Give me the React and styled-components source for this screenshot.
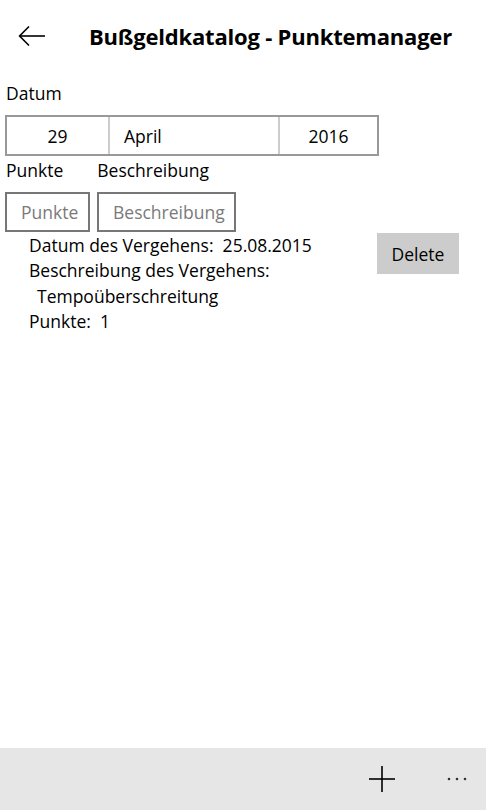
import React from 'react';
import styled, { createGlobalStyle } from 'styled-components';

const GlobalStyle = createGlobalStyle`
  html, body {
    margin: 0;
    padding: 0;
    background: #fff;
  }
  body {
    font-family: "Open Sans", "Noto Sans", sans-serif;
    color: #000;
  }
`;

const Page = styled.div`
  width: 486px;
  height: 810px;
  display: flex;
  flex-direction: column;
  overflow: hidden;
`;

const Header = styled.header`
  height: 72px;
  display: flex;
  align-items: center;
  padding-left: 18px;
  gap: 43px;
`;

const BackButton = styled.button`
  border: none;
  background: none;
  padding: 0;
  width: 28px;
  height: 24px;
  display: flex;
  align-items: center;
  justify-content: center;
  cursor: pointer;
`;

const Title = styled.h1`
  margin: 0;
  font-size: 22px;
  font-weight: 700;
  letter-spacing: -0.2px;
`;

const Content = styled.main`
  flex: 1;
  padding: 10px 0 0 5px;
`;

const Label = styled.div`
  font-size: 17.5px;
  line-height: 22px;
  margin-left: 1px;
`;

const DateBox = styled.div`
  margin-top: 11px;
  width: 374px;
  height: 41px;
  box-sizing: border-box;
  border: 2px solid #999;
  display: grid;
  grid-template-columns: 101px 170px 1fr;
`;

const DateCell = styled.div`
  display: flex;
  align-items: center;
  justify-content: ${p => (p.left ? 'flex-start' : 'center')};
  padding-left: ${p => (p.left ? '14px' : '0')};
  font-size: 17.5px;
  border-left: ${p => (p.first ? 'none' : '2px solid #ccc')};
`;

const LabelRow = styled.div`
  display: flex;
  gap: 33px;
  margin-top: 3px;
`;

const InputRow = styled.div`
  display: flex;
  gap: 7px;
  margin-top: 11px;
`;

const TextInput = styled.div`
  height: 40px;
  box-sizing: border-box;
  border: 2px solid #777;
  width: ${p => p.w}px;
  display: flex;
  align-items: center;
  padding-left: ${p => p.pad}px;
  color: #7a7a7a;
  font-size: 17.5px;
`;

const Entry = styled.div`
  display: flex;
  justify-content: space-between;
  padding-left: 24px;
  padding-right: 27px;
`;

const EntryText = styled.div`
  font-size: 17.5px;
  line-height: 25.3px;
  margin-top: 1px;
`;

const Line = styled.div`
  padding-left: ${p => (p.indent ? '8px' : '0')};
  white-space: pre;
`;

const DeleteButton = styled.button`
  margin-top: 1px;
  width: 82px;
  height: 41px;
  border: none;
  background: #cccccc;
  font-family: inherit;
  font-size: 17.5px;
  color: #000;
  padding: 0;
`;

const AppBar = styled.footer`
  height: 62px;
  background: #e6e6e6;
  display: flex;
  align-items: center;
  justify-content: flex-end;
  padding-right: 16px;
  gap: 47px;
`;

const BarButton = styled.button`
  border: none;
  background: none;
  padding: 0;
  display: flex;
  align-items: center;
  justify-content: center;
  width: ${p => p.w}px;
  height: 30px;
`;

const BackArrow = () => (
  <svg width="28" height="22" viewBox="0 0 28 22" fill="none" stroke="#000" strokeWidth="1.6">
    <path d="M27 11H2" />
    <path d="M11 1.5L1.6 11L11 20.5" />
  </svg>
);

const PlusIcon = () => (
  <svg width="26" height="26" viewBox="0 0 26 26" stroke="#000" strokeWidth="1.6">
    <path d="M13 0V26" />
    <path d="M0 13H26" />
  </svg>
);

const MoreIcon = () => (
  <svg width="22" height="6" viewBox="0 0 22 6" fill="#333">
    <circle cx="3" cy="3" r="1.3" />
    <circle cx="11" cy="3" r="1.3" />
    <circle cx="19" cy="3" r="1.3" />
  </svg>
);

export default function App() {
  return (
    <Page>
      <GlobalStyle />
      <Header>
        <BackButton aria-label="Zurück">
          <BackArrow />
        </BackButton>
        <Title>Bußgeldkatalog - Punktemanager</Title>
      </Header>
      <Content>
        <Label>Datum</Label>
        <DateBox>
          <DateCell first>29</DateCell>
          <DateCell left>April</DateCell>
          <DateCell>2016</DateCell>
        </DateBox>
        <LabelRow>
          <Label>Punkte</Label>
          <Label>Beschreibung</Label>
        </LabelRow>
        <InputRow>
          <TextInput w={85} pad={14}>Punkte</TextInput>
          <TextInput w={139} pad={14}>Beschreibung</TextInput>
        </InputRow>
        <Entry>
          <EntryText>
            <Line>{'Datum des Vergehens:  25.08.2015'}</Line>
            <Line>Beschreibung des Vergehens:</Line>
            <Line indent>Tempoüberschreitung</Line>
            <Line>{'Punkte:  1'}</Line>
          </EntryText>
          <DeleteButton>Delete</DeleteButton>
        </Entry>
      </Content>
      <AppBar>
        <BarButton w={30} aria-label="Hinzufügen">
          <PlusIcon />
        </BarButton>
        <BarButton w={26} aria-label="Mehr">
          <MoreIcon />
        </BarButton>
      </AppBar>
    </Page>
  );
}
